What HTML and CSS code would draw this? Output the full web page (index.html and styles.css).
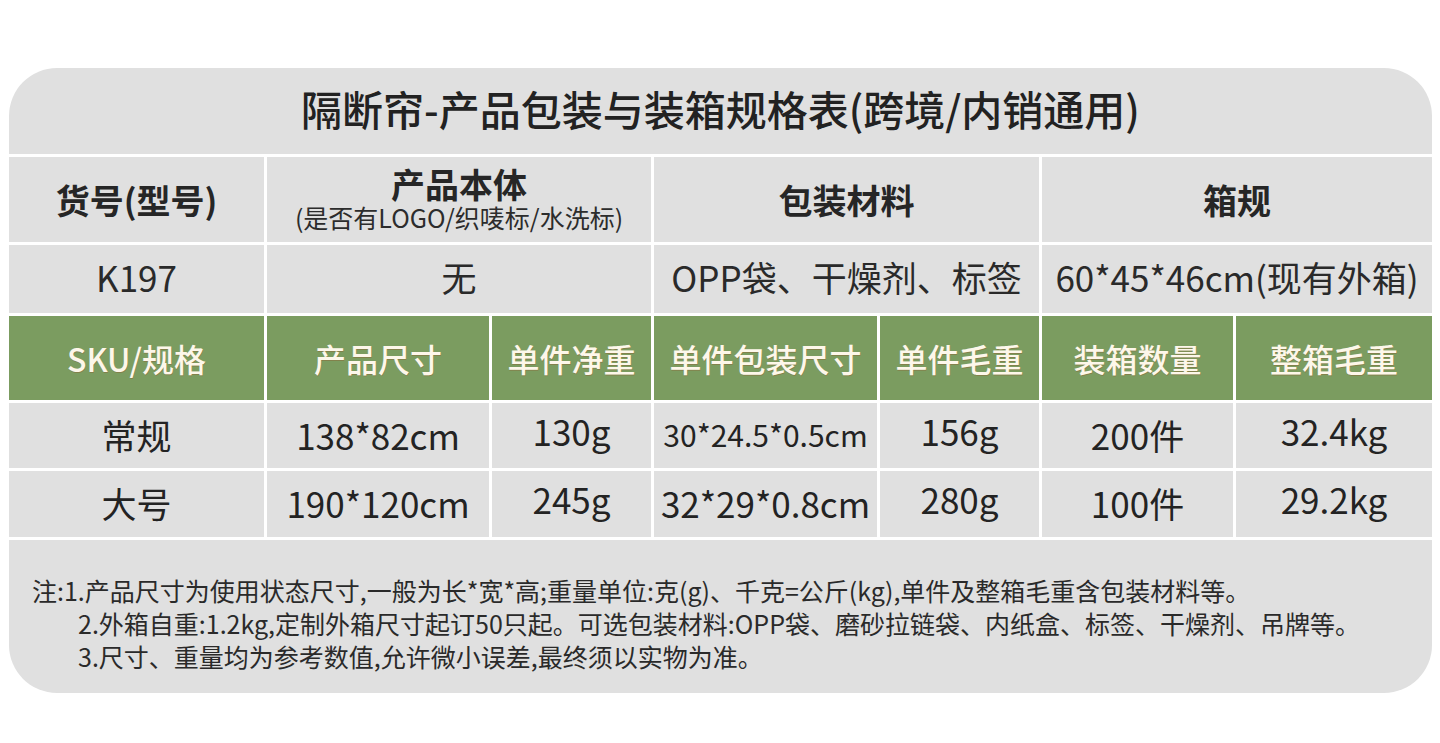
FILE: index.html
```html
<!DOCTYPE html>
<html lang="zh-CN">
<head>
<meta charset="utf-8">
<title>隔断帘-产品包装与装箱规格表</title>
<link rel="stylesheet" href="styles.css">
</head>
<body>
<div class="page">
  <div class="sheet">
    <div class="cell title span-all"><span class="t">隔断帘-产品包装与装箱规格表(跨境/内销通用)</span></div>

    <div class="cell head"><span class="t">货号(型号)</span></div>
    <div class="cell head span2 stack">
      <span class="t head-main">产品本体</span>
      <span class="t head-sub">(是否有LOGO/织唛标/水洗标)</span>
    </div>
    <div class="cell head span2"><span class="t">包装材料</span></div>
    <div class="cell head span2"><span class="t">箱规</span></div>

    <div class="cell val"><span class="t">K197</span></div>
    <div class="cell val span2"><span class="t">无</span></div>
    <div class="cell val span2"><span class="t">OPP袋、干燥剂、标签</span></div>
    <div class="cell val span2"><span class="t">60*45*46cm(现有外箱)</span></div>

    <div class="cell green"><span class="t">SKU/规格</span></div>
    <div class="cell green"><span class="t">产品尺寸</span></div>
    <div class="cell green"><span class="t">单件净重</span></div>
    <div class="cell green"><span class="t">单件包装尺寸</span></div>
    <div class="cell green"><span class="t">单件毛重</span></div>
    <div class="cell green"><span class="t">装箱数量</span></div>
    <div class="cell green"><span class="t">整箱毛重</span></div>

    <div class="cell data"><span class="t">常规</span></div>
    <div class="cell data"><span class="t">138*82cm</span></div>
    <div class="cell data up"><span class="t">130g</span></div>
    <div class="cell data small"><span class="t">30*24.5*0.5cm</span></div>
    <div class="cell data up"><span class="t">156g</span></div>
    <div class="cell data"><span class="t">200件</span></div>
    <div class="cell data up"><span class="t">32.4kg</span></div>

    <div class="cell data"><span class="t">大号</span></div>
    <div class="cell data"><span class="t">190*120cm</span></div>
    <div class="cell data up"><span class="t">245g</span></div>
    <div class="cell data"><span class="t">32*29*0.8cm</span></div>
    <div class="cell data up"><span class="t">280g</span></div>
    <div class="cell data"><span class="t">100件</span></div>
    <div class="cell data up"><span class="t">29.2kg</span></div>

    <div class="cell notes span-all">
      <p class="note">注:1.产品尺寸为使用状态尺寸,一般为长*宽*高;重量单位:克(g)、千克=公斤(kg),单件及整箱毛重含包装材料等。</p>
      <p class="note indent">2.外箱自重:1.2kg,定制外箱尺寸起订50只起。可选包装材料:OPP袋、磨砂拉链袋、内纸盒、标签、干燥剂、吊牌等。</p>
      <p class="note indent">3.尺寸、重量均为参考数值,允许微小误差,最终须以实物为准。</p>
    </div>
  </div>
</div>
</body>
</html>
```

FILE: styles.css
```css
* { box-sizing: border-box; }

html, body {
  margin: 0;
  padding: 0;
  background: #ffffff;
}

body {
  font-family: "Noto Sans CJK SC", "Noto Sans", sans-serif;
  color: #262626;
}

.page {
  padding: 68px 8px 0 9px;
}

.sheet {
  width: 1423px;
  display: grid;
  grid-template-columns: 255px 222px 159px 223px 159px 191px 196px;
  grid-template-rows: 86px 85px 68px 84px 65px 66px 153px;
  gap: 3px;
  border-radius: 48px;
  overflow: hidden;
}

.cell {
  background: #e0e0e0;
  display: flex;
  align-items: center;
  justify-content: center;
  white-space: nowrap;
}

.span-all { grid-column: 1 / -1; }
.span2 { grid-column: span 2; }

.t { display: inline-block; }

.title {
  font-size: 41px;
  font-weight: 500;
  color: #222;
  padding-bottom: 6px;
}

.head {
  font-size: 34px;
  font-weight: 700;
  color: #262626;
}

.stack {
  flex-direction: column;
  gap: 2px;
  padding-bottom: 4px;
}

.head-main {
  line-height: 36px;
}

.head-sub {
  font-size: 25px;
  font-weight: 400;
  line-height: 26px;
  color: #2c2c2c;
}

.val {
  font-size: 35px;
  font-weight: 400;
  color: #2a2a2a;
  padding-bottom: 6px;
}

.green {
  background: #7b9c60;
  color: #fdf7ea;
  font-size: 32px;
  font-weight: 500;
  text-shadow: 0.5px 0.5px 0 rgba(140, 95, 50, 0.45);
}

.data {
  font-size: 35px;
  font-weight: 400;
  color: #232323;
  padding-bottom: 3px;
}

.data.up .t { margin-top: -8px; }
.data.small { font-size: 30px; }

.notes {
  flex-direction: column;
  align-items: flex-start;
  justify-content: flex-start;
  padding: 34px 0 0 23px;
}

.note {
  margin: 0;
  font-size: 25px;
  line-height: 33px;
  color: #2a2a2a;
}

.note.indent { padding-left: 46px; }
```
